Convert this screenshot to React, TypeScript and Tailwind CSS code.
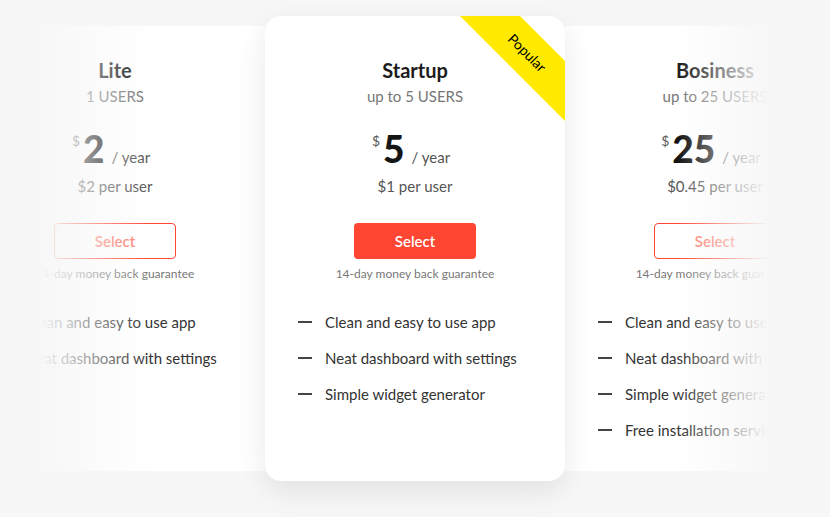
import React from 'react';

interface Plan {
    name: string;
    users: string;
    price: string;
    perUser: string;
    features: string[];
    featured?: boolean;
}

const plans: Plan[] = [
    {
        name: 'Lite',
        users: '1 USERS',
        price: '2',
        perUser: '$2 per user',
        features: ['Clean and easy to use app', 'Neat dashboard with settings'],
    },
    {
        name: 'Startup',
        users: 'up to 5 USERS',
        price: '5',
        perUser: '$1 per user',
        features: ['Clean and easy to use app', 'Neat dashboard with settings', 'Simple widget generator'],
        featured: true,
    },
    {
        name: 'Bosiness',
        users: 'up to 25 USERS',
        price: '25',
        perUser: '$0.45 per user',
        features: [
            'Clean and easy to use app',
            'Neat dashboard with settings',
            'Simple widget generator',
            'Free installation service',
        ],
    },
];

const PlanCard: React.FC<{ plan: Plan }> = ({ plan }) => {
    const featured = !!plan.featured;

    return (
        <div
            className={
                featured
                    ? 'relative z-10 mt-[16px] flex h-[465px] w-[300px] shrink-0 flex-col items-center overflow-hidden rounded-2xl bg-white pt-[42px] shadow-[0_10px_30px_rgba(0,0,0,0.09)]'
                    : 'relative mt-[26px] flex h-[445px] w-[300px] shrink-0 flex-col items-center bg-white pt-[32px]'
            }
        >
            {featured && (
                <>
                    <svg className="absolute right-0 top-0" width="105" height="105" viewBox="0 0 105 105">
                        <polygon points="0,0 60,0 105,45 105,105" fill="#ffea00" />
                    </svg>
                    <div className="absolute left-[222px] top-[28px] w-[80px] rotate-45 text-center text-[14px] leading-[18px] text-black">
                        Popular
                    </div>
                </>
            )}

            <h3 className="text-[20px] font-bold leading-6 text-[#1c1c1c]">{plan.name}</h3>
            <p className="mt-1 text-[15px] leading-5 text-[#777]">{plan.users}</p>

            <div className="mt-[23px] flex items-baseline pr-2">
                <span className="mr-[3px] self-start mt-[5px] text-[14px] leading-none text-[#555]">$</span>
                <span className="text-[37px] font-black leading-[40px] text-[#151515]">{plan.price}</span>
                <span className="ml-[7px] text-[15px] text-[#555]">/ year</span>
            </div>
            <p className="mt-[7px] text-[15px] leading-5 text-[#555]">{plan.perUser}</p>

            <button
                className={
                    featured
                        ? 'mt-[27px] h-9 w-[122px] rounded-[4px] bg-[#ff4633] text-[15px] font-semibold text-white'
                        : 'mt-[27px] h-9 w-[122px] rounded-[4px] border border-[#ff4633] text-[15px] font-semibold text-[#ff7a6a]'
                }
            >
                Select
            </button>
            <p className="mt-[7px] text-[12px] leading-4 text-[#777]">14-day money back guarantee</p>

            <ul className="mt-[30px] flex flex-col gap-4 self-stretch pl-[33px]">
                {plan.features.map((f) => (
                    <li key={f} className="flex items-center gap-[13px] text-[15px] leading-5 text-[#333]">
                        <span className="h-[2px] w-[14px] shrink-0 bg-[#444]" />
                        {f}
                    </li>
                ))}
            </ul>
        </div>
    );
};

export default function App() {
    return (
        <div
            className="relative flex h-[517px] w-full justify-center overflow-hidden bg-[#f7f7f7]"
            style={{ fontFamily: 'Lato, "Open Sans", sans-serif' }}
        >
            <div className="flex w-[900px] shrink-0 items-start">
                {plans.map((p) => (
                    <PlanCard key={p.name} plan={p} />
                ))}
            </div>

            {/* edge fades */}
            <div className="pointer-events-none absolute left-0 top-0 z-20 h-full w-[155px] bg-[linear-gradient(to_right,#f7f7f7_40px,rgba(247,247,247,0)_150px)]" />
            <div className="pointer-events-none absolute right-0 top-0 z-20 h-full w-[160px] bg-[linear-gradient(to_right,rgba(247,247,247,0)_8px,#f7f7f7_98px)]" />
        </div>
    );
}
